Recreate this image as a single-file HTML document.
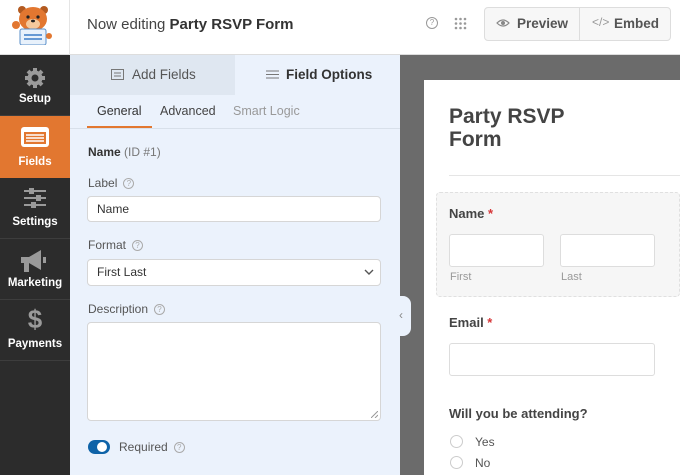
<!DOCTYPE html>
<html><head><style>
*{box-sizing:border-box;margin:0;padding:0}
body{width:680px;height:475px;overflow:hidden;font-family:"Liberation Sans",sans-serif;background:#fff;position:relative;color:#444}
.abs{position:absolute}
.top{left:0;top:0;width:680px;height:55px;background:#fff;border-bottom:1px solid #ddd}
.side{left:0;top:55px;width:70px;height:420px;background:#2c2c2c}
.si{position:absolute;left:0;width:70px;height:61px;border-bottom:1px solid #3d3d3d;color:#fff;font-size:11.5px;font-weight:bold;text-align:center}
.si span{position:absolute;left:0;right:0;bottom:10px}
.panel{left:70px;top:55px;width:330px;height:420px;background:#ebf2fc}
.lbl{position:absolute;left:88px;font-size:12px;color:#555}
.q{display:inline-block;width:11px;height:11px;border:1px solid #aaa;border-radius:50%;font-size:8px;line-height:9px;text-align:center;color:#aaa;margin-left:6px;vertical-align:1px}
.inp{position:absolute;left:87px;width:294px;background:#fff;border:1px solid #d6d6d6;border-radius:4px;font-size:12px;color:#333;padding-left:9px}
.prev{left:400px;top:55px;width:280px;height:420px;background:#6b6b6b}
.card{left:424px;top:80px;width:256px;height:395px;background:#fff}
.fi{position:absolute;background:#fff;border:1px solid #ddd;border-radius:3px}
.radio{position:absolute;left:450px;width:13px;height:13px;border:1px solid #ccc;border-radius:50%;background:#fff}
</style></head><body>
<div class="abs top"></div>
<div class="abs" style="left:0;top:0;width:70px;height:55px;border-right:1px solid #e5e5e5"></div>
<!-- logo -->
<svg class="abs" style="left:8px;top:5px" width="50" height="40" viewBox="0 0 50 40">
<circle cx="14" cy="5" r="4" fill="#b35a20"/><circle cx="36" cy="5" r="4" fill="#b35a20"/>
<ellipse cx="25" cy="14" rx="14" ry="12" fill="#e27730"/>
<ellipse cx="25" cy="19" rx="7" ry="5" fill="#f5c99c"/>
<circle cx="20" cy="12" r="1.6" fill="#222"/><circle cx="30" cy="12" r="1.6" fill="#222"/>
<ellipse cx="25" cy="16" rx="2" ry="1.4" fill="#222"/>
<circle cx="8" cy="20" r="4" fill="#e27730"/>
<rect x="12" y="24" width="26" height="16" rx="2" fill="#e8f1fb" stroke="#5a8fc9"/>
<line x1="16" y1="30" x2="34" y2="30" stroke="#3b7cc7" stroke-width="1.5"/>
<line x1="16" y1="34" x2="34" y2="34" stroke="#3b7cc7" stroke-width="1.5"/>
<circle cx="41" cy="31" r="3" fill="#e27730"/>
</svg>
<div class="abs" style="left:87px;top:16px;font-size:15px;color:#444">Now editing <b style="color:#333">Party RSVP Form</b></div>
<div class="abs" style="left:426px;top:17px;width:12px;height:12px;border:1px solid #999;border-radius:50%;font-size:8px;line-height:10px;text-align:center;color:#999">?</div>
<svg class="abs" style="left:454px;top:17px" width="13" height="13"><g fill="#999"><circle cx="2" cy="2" r="1.3"/><circle cx="6.5" cy="2" r="1.3"/><circle cx="11" cy="2" r="1.3"/><circle cx="2" cy="6.5" r="1.3"/><circle cx="6.5" cy="6.5" r="1.3"/><circle cx="11" cy="6.5" r="1.3"/><circle cx="2" cy="11" r="1.3"/><circle cx="6.5" cy="11" r="1.3"/><circle cx="11" cy="11" r="1.3"/></g></svg>
<div class="abs" style="left:484px;top:7px;width:187px;height:34px;border:1px solid #ddd;border-radius:4px;background:#f7f7f7"></div>
<div class="abs" style="left:579px;top:7px;width:1px;height:34px;background:#ddd"></div>
<svg class="abs" style="left:496px;top:18px" width="14" height="10" viewBox="0 0 14 10"><path d="M1 5Q7 -1 13 5Q7 11 1 5Z" fill="none" stroke="#888" stroke-width="1.2"/><circle cx="7" cy="5" r="2" fill="#888"/></svg>
<div class="abs" style="left:517px;top:16px;font-size:13.5px;color:#555;font-weight:bold">Preview</div>
<div class="abs" style="left:592px;top:15px;font-size:12px;color:#999">&lt;/&gt;</div>
<div class="abs" style="left:614px;top:16px;font-size:13.5px;color:#555;font-weight:bold">Embed</div>

<div class="abs side"></div>
<div class="si" style="top:55px"><svg style="position:absolute;left:24px;top:12px" width="22" height="22" viewBox="0 0 22 22"><g fill="#9a9a9a"><circle cx="11" cy="11" r="7.5"/><g stroke="#9a9a9a" stroke-width="4"><line x1="11" y1="1" x2="11" y2="21"/><line x1="1" y1="11" x2="21" y2="11"/><line x1="4" y1="4" x2="18" y2="18"/><line x1="18" y1="4" x2="4" y2="18"/></g></g><circle cx="11" cy="11" r="3.5" fill="#2c2c2c"/></svg><span>Setup</span></div>
<div class="si" style="top:116px;background:#e27730;border:none;height:62px"><svg style="position:absolute;left:20px;top:10px" width="30" height="22" viewBox="0 0 30 22"><rect x="1" y="1" width="28" height="20" rx="3" fill="#fff"/><rect x="4" y="6" width="22" height="12" fill="#e27730"/><g stroke="#fff" stroke-width="1.5"><line x1="6" y1="9" x2="24" y2="9"/><line x1="6" y1="12" x2="24" y2="12"/><line x1="6" y1="15" x2="24" y2="15"/></g></svg><span>Fields</span></div>
<div class="si" style="top:178px"><svg style="position:absolute;left:23px;top:9px" width="24" height="22" viewBox="0 0 24 22"><g stroke="#9a9a9a" stroke-width="2"><line x1="1" y1="4" x2="23" y2="4"/><line x1="1" y1="11" x2="23" y2="11"/><line x1="1" y1="18" x2="23" y2="18"/></g><g fill="#9a9a9a"><rect x="6" y="1" width="5" height="6"/><rect x="13" y="8" width="5" height="6"/><rect x="8" y="15" width="5" height="6"/></g></svg><span>Settings</span></div>
<div class="si" style="top:239px"><svg style="position:absolute;left:19px;top:10px" width="30" height="24" viewBox="0 0 30 24"><path d="M2 8h8l12-7v20l-12-7h-8z" fill="#9a9a9a"/><rect x="5" y="13" width="5" height="10" fill="#9a9a9a"/><rect x="24" y="8" width="3" height="6" fill="#9a9a9a"/></svg><span>Marketing</span></div>
<div class="si" style="top:300px"><div style="position:absolute;left:0;right:0;top:4px;font-size:26px;color:#9a9a9a">$</div><span>Payments</span></div>

<div class="abs panel"></div>
<div class="abs" style="left:70px;top:55px;width:165px;height:40px;background:#dfe7f1"></div>
<div class="abs" style="left:235px;top:55px;width:165px;height:40px;background:#ebf2fc"></div>
<svg class="abs" style="left:111px;top:69px" width="13" height="11"><rect x="0.5" y="0.5" width="12" height="10" fill="none" stroke="#777"/><g stroke="#777"><line x1="3" y1="4" x2="10" y2="4"/><line x1="3" y1="7" x2="10" y2="7"/></g></svg>
<div class="abs" style="left:132px;top:67px;font-size:13.5px;color:#555">Add Fields</div>
<svg class="abs" style="left:266px;top:69px" width="13" height="11"><g stroke="#777"><line x1="0" y1="2" x2="13" y2="2"/><line x1="0" y1="5.5" x2="13" y2="5.5"/><line x1="0" y1="9" x2="13" y2="9"/></g></svg>
<div class="abs" style="left:286px;top:67px;font-size:13.5px;color:#333;font-weight:bold">Field Options</div>
<div class="abs" style="left:97px;top:104px;font-size:12.5px;color:#333">General</div>
<div class="abs" style="left:87px;top:126px;width:65px;height:2px;background:#e27730"></div>
<div class="abs" style="left:160px;top:104px;font-size:12.5px;color:#444">Advanced</div>
<div class="abs" style="left:233px;top:104px;font-size:12.5px;color:#999">Smart Logic</div>
<div class="abs" style="left:70px;top:128px;width:330px;height:1px;background:#d8e0ea"></div>
<div class="lbl" style="top:145px;color:#333"><b>Name</b> <span style="color:#777">(ID #1)</span></div>
<div class="lbl" style="top:176px">Label<span class="q">?</span></div>
<div class="inp" style="top:196px;height:26px;line-height:24px">Name</div>
<div class="lbl" style="top:238px">Format<span class="q">?</span></div>
<div class="inp" style="top:259px;height:27px;line-height:25px">First Last<svg style="position:absolute;right:6px;top:9px" width="10" height="7"><path d="M1 1l4 4 4-4" stroke="#555" fill="none" stroke-width="1.4"/></svg></div>
<div class="lbl" style="top:302px">Description<span class="q">?</span></div>
<div class="inp" style="top:322px;height:99px"><svg style="position:absolute;right:2px;bottom:2px" width="7" height="7"><path d="M0 7L7 0M4 7L7 4" stroke="#999"/></svg></div>
<div class="abs" style="left:88px;top:440px;width:22px;height:14px;border-radius:7px;background:#0e63a8"></div>
<div class="abs" style="left:97px;top:442px;width:10px;height:10px;border-radius:50%;background:#fff"></div>
<div class="lbl" style="top:440px">&nbsp;</div>
<div class="abs" style="left:119px;top:440px;font-size:12px;color:#555">Required<span class="q">?</span></div>

<div class="abs prev"></div>
<div class="abs" style="left:399px;top:296px;width:12px;height:40px;background:#ebf2fc;border-radius:0 8px 8px 0"></div>
<div class="abs" style="left:399px;top:308px;font-size:12px;color:#888">‹</div>
<div class="abs card"></div>
<div class="abs" style="left:449px;top:105px;font-size:21px;font-weight:bold;color:#444;line-height:23px">Party RSVP<br>Form</div>
<div class="abs" style="left:449px;top:175px;width:231px;height:1px;background:#e5e5e5"></div>
<div class="abs" style="left:436px;top:192px;width:244px;height:105px;background:#f6f6f6;border:1px dashed #e0e0e0;border-radius:4px"></div>
<div class="abs" style="left:449px;top:206px;font-size:13px;font-weight:bold;color:#444">Name <span style="color:#d63638">*</span></div>
<div class="fi" style="left:449px;top:234px;width:95px;height:33px"></div>
<div class="fi" style="left:560px;top:234px;width:95px;height:33px"></div>
<div class="abs" style="left:450px;top:271px;font-size:11px;color:#999">First</div>
<div class="abs" style="left:561px;top:271px;font-size:11px;color:#999">Last</div>
<div class="abs" style="left:449px;top:315px;font-size:13px;font-weight:bold;color:#444">Email <span style="color:#d63638">*</span></div>
<div class="fi" style="left:449px;top:343px;width:206px;height:33px"></div>
<div class="abs" style="left:449px;top:406px;font-size:13px;font-weight:bold;color:#444">Will you be attending?</div>
<div class="radio" style="top:435px"></div>
<div class="abs" style="left:475px;top:435px;font-size:12px;color:#555">Yes</div>
<div class="radio" style="top:456px"></div>
<div class="abs" style="left:475px;top:456px;font-size:12px;color:#555">No</div>
</body></html>
